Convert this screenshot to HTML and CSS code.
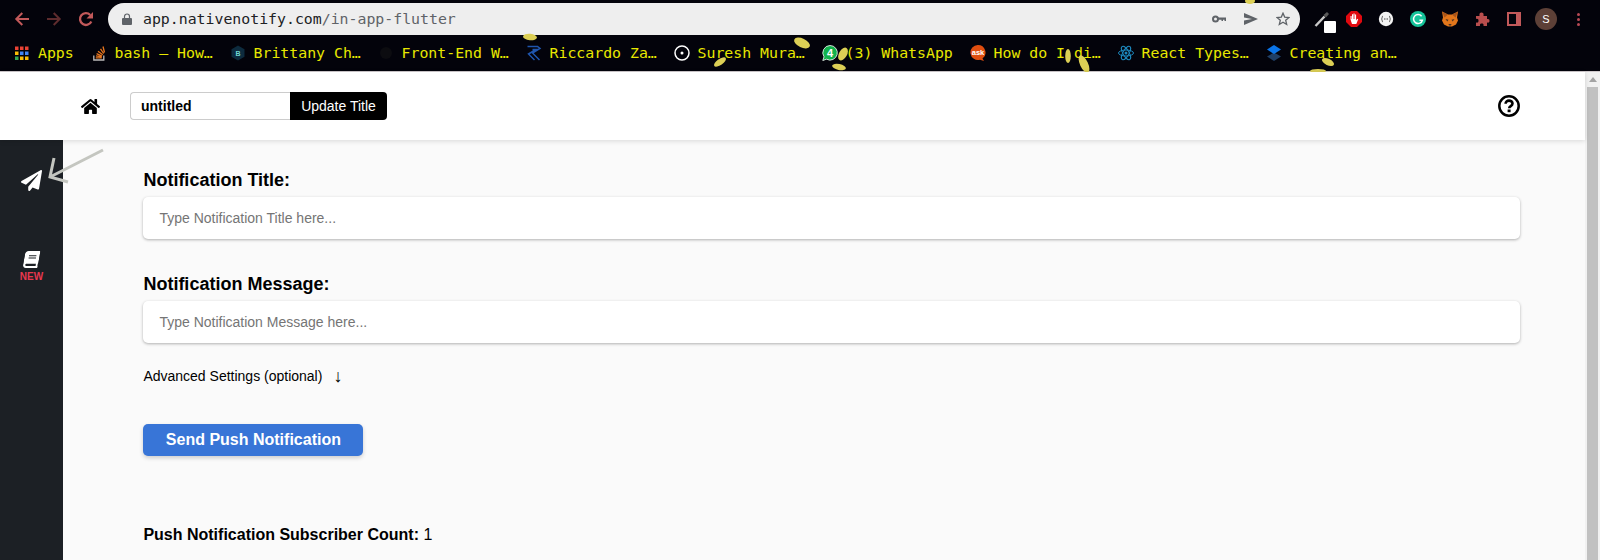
FILE: index.html
```html
<!DOCTYPE html>
<html lang="en">
<head>
<meta charset="utf-8">
<title>Native Notify</title>
<link rel="stylesheet" href="styles.css">
</head>
<body>
<div class="chrome">
  <div class="toolbar">
    <div class="nav">
      <svg class="nav-icon" viewBox="0 0 16 16"><path d="M15 8H2.500M8.300 2L2.300 8L8.300 14" fill="none" stroke="#c2595a" stroke-width="2"/></svg>
      <svg class="nav-icon" viewBox="0 0 16 16"><path d="M1 8H13.500M7.700 2L13.700 8L7.700 14" fill="none" stroke="#5e2c2e" stroke-width="2"/></svg>
      <svg class="nav-icon" viewBox="0 0 16 16"><path d="M13.300 10.500A5.900 5.900 0 1 1 12.200 4" fill="none" stroke="#c2595a" stroke-width="2.300"/><path d="M15 1V7.500H8.500z" fill="#c2595a"/></svg>
    </div>
    <div class="omnibox">
      <svg class="lock" viewBox="0 0 10 12"><path d="M1 5h8a1 1 0 0 1 1 1v5a1 1 0 0 1-1 1H1a1 1 0 0 1-1-1V6a1 1 0 0 1 1-1z" fill="#5f6368"/><path d="M2.500 5V3.500a2.500 2.500 0 0 1 5 0V5" fill="none" stroke="#5f6368" stroke-width="1.200"/></svg>
      <span class="url"><span class="host">app.nativenotify.com</span>/in-app-flutter</span>
      <div class="omni-actions">
        <svg class="omni-icon" viewBox="0 0 14 14"><circle cx="3.500" cy="7" r="2.500" fill="none" stroke="#5f6368" stroke-width="2"/><path d="M6 5.500h8V9h-1.500V7.800H11V9H9.500V7.800H6z" fill="#5f6368"/></svg>
        <svg class="omni-icon" viewBox="0 0 14 14"><path d="M0 1L14 7L0 13V8.500L8 7L0 5.500z" fill="#5f6368"/></svg>
        <svg class="omni-icon" viewBox="0 0 14 14"><path d="M7 1.200l1.700 3.900 4.300.4-3.300 2.800 1 4.200L7 10.300 3.300 12.500l1-4.200L1 5.500l4.300-.4z" fill="none" stroke="#5f6368" stroke-width="1.300"/></svg>
      </div>
    </div>
    <div class="extensions">
      <div class="ext-dropper">
        <svg class="ext-icon" viewBox="0 0 16 16"><path d="M1.500 15L10.500 5.500" stroke="#c9c9c9" stroke-width="2.400" fill="none"/><path d="M9.500 4l3.500-3 2 2-3 3.500z" fill="#5a5a5a"/></svg>
        <span class="ext-square"></span>
      </div>
      <svg class="ext-icon" viewBox="0 0 16 16"><path d="M5 0h6l5 5v6l-5 5H5l-5-5V5z" fill="#e0090f"/><path d="M4.500 8.500V5h1.100v3H6V3.200h1.100V8h.4V2.600h1.100V8H9V3.400h1.100V9.500l1.100-1.800 1 .6L10.300 13H6z" fill="#fff"/></svg>
      <svg class="ext-icon" viewBox="0 0 16 16"><circle cx="8" cy="8" r="7.200" fill="#f2f2f2"/><path d="M5 5C3.800 5 4.600 7.500 3.300 8c1.300.5.500 3 1.700 3M11 5c1.200 0 .4 2.500 1.700 3-1.300.5-.5 3-1.700 3" fill="none" stroke="#444" stroke-width=".9"/><path d="M6 7.600h1v1H6zM7.500 7.600h1v1h-1zM9 7.600h1v1H9z" fill="#444"/></svg>
      <svg class="ext-icon" viewBox="0 0 16 16"><circle cx="8" cy="8" r="8" fill="#15c39a"/><path d="M11.600 5.200A4.500 4.500 0 1 0 12.400 9.200H9.400" fill="none" stroke="#fff" stroke-width="1.500"/></svg>
      <svg class="ext-icon" viewBox="0 0 16 16"><path d="M0 .5l6 3h4l6-3-1 6 1 3-2 4L10 15.500H6l-4-2-2-4 1-3z" fill="#e2761b"/><path d="M0 .5L6 3.500 2.500 6.500zM16 .5L10 3.500l3.500 3z" fill="#a8551a"/><path d="M3.500 8l3 .8-1.200 1.700zM12.500 8l-3 .8 1.200 1.700zM6.500 13h3l-.5 1.500H7z" fill="#4a3322"/></svg>
      <svg class="ext-icon" viewBox="0 0 16 16"><path d="M2 5h3.500C5 2.500 6 1.500 7.500 1.500S10 2.500 9.500 5H13v3c2-.5 2.500.6 2.500 1.800S15 12 13 11.500V15H9.500c.4-1.800-.5-2.400-1.700-2.400S5.600 13.200 6 15H2v-3.500c1.800.5 2.500-.4 2.500-1.800S3.800 7.500 2 8z" fill="#b94e4e"/></svg>
      <svg class="ext-icon" viewBox="0 0 16 16"><path d="M2 2h12v12H2z" fill="none" stroke="#c2595a" stroke-width="2"/><path d="M10 2h4v12h-4z" fill="#c2595a"/></svg>
      <span class="avatar">S</span>
      <span class="menu-dots"><i></i><i></i><i></i></span>
    </div>
  </div>
  <div class="bookmarks">
    <div class="bookmark">
      <svg class="bm-icon" viewBox="0 0 16 16"><path d="M1 1.500h3.500V5H1z" fill="#ea4335"/><path d="M6 1.500h3.500V5H6z" fill="#ea4335"/><path d="M11 1.500h3.500V5H11z" fill="#ea4335"/><path d="M1 6.500h3.500V10H1z" fill="#fbbc05"/><path d="M6 6.500h3.500V10H6z" fill="#4285f4"/><path d="M11 6.500h3.500V10H11z" fill="#4285f4"/><path d="M1 11.500h3.500V15H1z" fill="#34a853"/><path d="M6 11.500h3.500V15H6z" fill="#fbbc05"/><path d="M11 11.500h3.500V15H11z" fill="#fbbc05"/></svg>
      <span>Apps</span>
    </div>
    <div class="bookmark">
      <svg class="bm-icon" viewBox="0 0 16 16"><path d="M2.800 10.500v4.500h10v-4.500" fill="none" stroke="#bcbbbb" stroke-width="1.300"/><path d="M4.800 12.800h6M5 10.900l5.800 1M5.600 8.700l5.400 2.400M7 6.300l4.700 3.500M9.500 3.800l3.200 4.700M12 1.500l1.500 6" stroke="#e8761f" stroke-width="1.300" fill="none"/></svg>
      <span>bash – How…</span>
    </div>
    <div class="bookmark">
      <svg class="bm-icon" viewBox="0 0 16 16"><path d="M8 .5l6.500 3.800v7.400L8 15.500l-6.500-3.800V4.300z" fill="#0d2b3e"/><text x="8" y="10.800" class="bm-glyph" fill="#6fd6d0">B</text></svg>
      <span>Brittany Ch…</span>
    </div>
    <div class="bookmark">
      <svg class="bm-icon" viewBox="0 0 16 16"><circle cx="8" cy="8" r="6" fill="#0c0c10"/></svg>
      <span>Front-End W…</span>
    </div>
    <div class="bookmark">
      <svg class="bm-icon" viewBox="0 0 16 16"><path d="M1.500 1.500h10l2.500 2-7.500 4.500 7 7M6.500 4.500h3.500L2.500 9l6 6" fill="none" stroke="#1f55ad" stroke-width="1.500"/></svg>
      <span>Riccardo Za…</span>
    </div>
    <div class="bookmark">
      <svg class="bm-icon" viewBox="0 0 16 16"><circle cx="8" cy="8" r="7" fill="none" stroke="#fff" stroke-width="1.500"/><circle cx="8" cy="8" r="1.500" fill="#fff"/></svg>
      <span>Suresh Mura…</span>
    </div>
    <div class="bookmark">
      <svg class="bm-icon" viewBox="0 0 16 16"><path d="M8 .5a7.300 7.300 0 1 1-3.500 13.700L.8 15.500l1.200-3.700A7.300 7.300 0 0 1 8 .5z" fill="#12b24c" stroke="#fff" stroke-width=".8"/><text x="8" y="12" class="bm-glyph bm-glyph-large" fill="#fff">4</text></svg>
      <span>(3) WhatsApp</span>
    </div>
    <div class="bookmark">
      <svg class="bm-icon" viewBox="0 0 16 16"><path d="M8 0a7.500 7.500 0 0 1 4.500 13.500l1.500 2.500-4-1.300A7.500 7.500 0 1 1 8 0z" fill="#df4d0f"/><text x="8" y="10" class="bm-glyph bm-glyph-ask" fill="#fff">ask</text></svg>
      <span>How do I di…</span>
    </div>
    <div class="bookmark">
      <svg class="bm-icon" viewBox="0 0 16 16"><g fill="none" stroke="#1d87bc" stroke-width="1"><ellipse cx="8" cy="8" rx="7.500" ry="3"/><ellipse cx="8" cy="8" rx="7.500" ry="3" transform="rotate(60 8 8)"/><ellipse cx="8" cy="8" rx="7.500" ry="3" transform="rotate(120 8 8)"/></g><circle cx="8" cy="8" r="1.500" fill="#1d87bc"/></svg>
      <span>React Types…</span>
    </div>
    <div class="bookmark">
      <svg class="bm-icon" viewBox="0 0 16 16"><path d="M8 7.500l7 4-7 4.500-7-4.500z" fill="#1f3f66"/><path d="M8 0l7 4.500L8 9 1 4.500z" fill="#0a74e8"/></svg>
      <span>Creating an…</span>
    </div>
  </div>
</div>
<div class="app">
  <div class="viewport">
    <header class="topbar">
      <svg class="home" viewBox="0 0 576 512"><path d="M280.370 148.260L96 300.110V464a16 16 0 0 0 16 16l112.060-.29a16 16 0 0 0 15.920-16V368a16 16 0 0 1 16-16h64a16 16 0 0 1 16 16v95.640a16 16 0 0 0 16 16.050L464 480a16 16 0 0 0 16-16V300L295.670 148.260a12.190 12.190 0 0 0-15.300 0zM571.600 251.470L488 182.560V44.050a12 12 0 0 0-12-12h-56a12 12 0 0 0-12 12v72.610L318.470 43a48 48 0 0 0-61 0L4.340 251.470a12 12 0 0 0-1.600 16.900l25.500 31A12 12 0 0 0 45.150 301l235.220-193.740a12.190 12.190 0 0 1 15.300 0L530.900 301a12 12 0 0 0 16.900-1.600l25.500-31a12 12 0 0 0-1.700-16.930z"/></svg>
      <div class="title-form">
        <input class="title-input" type="text" value="untitled" aria-label="Title">
        <button class="title-button" type="button">Update Title</button>
      </div>
      <svg class="help" viewBox="0 0 22 22"><circle cx="11" cy="11" r="9.700" fill="none" stroke="#000" stroke-width="2.500"/><path d="M7.600 8.700C7.600 6.800 9.100 5.600 11 5.600s3.500 1.100 3.500 3c0 2.600-3.300 2.500-3.300 4.700" fill="none" stroke="#000" stroke-width="2.600"/><path d="M9.600 14.500h3v2.700h-3z"/></svg>
    </header>
    <div class="workspace">
      <nav class="sidebar">
        <svg class="plane" viewBox="0 0 512 512"><path d="M476 3.200L12.500 270.600c-18.100 10.400-15.800 35.600 2.200 43.200L121 358.400l287.300-253.200c5.500-4.900 13.300 2.600 8.600 8.300L176 407v80.500c0 23.600 28.500 32.900 42.500 15.800L282 426l124.600 52.200c14.200 6 30.400-2.900 33-18.200l72-432C515 7.800 493.300-6.800 476 3.200z"/></svg>
        <div class="book-link">
          <svg class="book" viewBox="0 0 448 512"><path d="M448 360V24c0-13.300-10.700-24-24-24H96C43 0 0 43 0 96v320c0 53 43 96 96 96h328c13.300 0 24-10.700 24-24v-16c0-7.500-3.500-14.300-8.900-18.700-4.200-15.400-4.200-59.300 0-74.700 5.400-4.300 8.900-11.100 8.900-18.600zM128 134c0-3.300 2.700-6 6-6h212c3.300 0 6 2.700 6 6v20c0 3.300-2.700 6-6 6H134c-3.300 0-6-2.700-6-6v-20zm0 64c0-3.300 2.700-6 6-6h212c3.300 0 6 2.700 6 6v20c0 3.300-2.700 6-6 6H134c-3.300 0-6-2.700-6-6v-20zm253.400 250H96c-17.700 0-32-14.300-32-32 0-17.600 14.400-32 32-32h285.400c-1.900 17.100-1.900 46.900 0 64z"/></svg>
          <span class="new-tag">NEW</span>
        </div>
      </nav>
      <main class="content">
        <label class="field-label">Notification Title:</label>
        <div class="field">Type Notification Title here...</div>
        <label class="field-label field-label-next">Notification Message:</label>
        <div class="field">Type Notification Message here...</div>
        <div class="advanced"><span>Advanced Settings (optional)</span><span class="advanced-arrow">↓</span></div>
        <button class="send" type="button">Send Push Notification</button>
        <p class="count"><b>Push Notification Subscriber Count:</b> 1</p>
      </main>
    </div>
  </div>
  <div class="scrollbar">
    <span class="scroll-up"></span>
    <span class="scroll-thumb"></span>
  </div>
</div>
<svg class="overlay" viewBox="0 0 1600 560" aria-hidden="true">
  <g fill="#dccf55">
    <ellipse cx="530" cy="37" rx="7" ry="3.200" transform="rotate(5 530 37)"/>
    <ellipse cx="802" cy="43" rx="8.500" ry="4.500" transform="rotate(25 802 43)"/>
    <ellipse cx="720" cy="62" rx="7" ry="3" transform="rotate(-35 720 62)"/>
    <ellipse cx="843" cy="54" rx="4" ry="7" transform="rotate(30 843 54)"/>
    <ellipse cx="839" cy="67" rx="7" ry="3" transform="rotate(12 839 67)"/>
    <ellipse cx="1250" cy="1" rx="5" ry="3"/>
    <ellipse cx="1068" cy="56" rx="2.800" ry="7"/>
    <ellipse cx="1084" cy="64" rx="4" ry="9.500" transform="rotate(-25 1084 64)"/>
    <ellipse cx="1328" cy="62" rx="6.500" ry="3.200" transform="rotate(25 1328 62)"/>
    <ellipse cx="1318" cy="71" rx="8" ry="2"/>
  </g>
  <path d="M103 150L50 177M54 158L50 177L68 182" fill="none" stroke="#c4c6c0" stroke-width="3"/>
</svg>
</body>
</html>
```
FILE: styles.css
```css
* { box-sizing: border-box; }
html, body { margin: 0; height: 100%; overflow: hidden; }
body {
  position: relative;
  width: 1600px;
  height: 560px;
  font-family: "Liberation Sans", Arial, sans-serif;
  background: #fafafa;
  color: #000;
}

/* Browser chrome */
.chrome {
  height: 72px;
  background: #03030b;
  border-bottom: 1px solid #cfc9cc;
}
.toolbar {
  display: flex;
  align-items: center;
  height: 35px;
  padding-top: 3px;
}
.nav {
  display: flex;
  align-items: center;
  gap: 16px;
  width: 108px;
  padding-left: 14px;
}
.nav-icon { width: 16px; height: 16px; }
.omnibox {
  display: flex;
  align-items: center;
  width: 1192px;
  height: 32px;
  padding: 0 10px 0 14px;
  border-radius: 16px;
  background: #eeeeee;
}
.lock { width: 10px; height: 12px; margin-right: 11px; }
.url {
  font: 14.85px "DejaVu Sans Mono", monospace;
  color: #5f6368;
}
.host { color: #202124; }
.omni-actions {
  display: flex;
  align-items: center;
  gap: 18px;
  margin-left: auto;
}
.omni-icon { width: 14px; height: 14px; }
.extensions {
  display: grid;
  grid-auto-flow: column;
  grid-auto-columns: 32px;
  justify-items: center;
  align-items: center;
  padding-left: 6px;
}
.ext-icon { display: block; width: 16px; height: 16px; }
.ext-dropper { position: relative; width: 16px; height: 16px; }
.ext-square {
  position: absolute;
  left: 10px;
  top: 10px;
  width: 12px;
  height: 12px;
  border-radius: 1px;
  background: #fff;
}
.avatar {
  display: flex;
  align-items: center;
  justify-content: center;
  width: 22px;
  height: 22px;
  border-radius: 50%;
  background: #5d4037;
  color: #fff;
  font-size: 11px;
}
.menu-dots {
  display: flex;
  flex-direction: column;
  gap: 2px;
}
.menu-dots i {
  width: 3px;
  height: 3px;
  border-radius: 50%;
  background: #b84a55;
}
.bookmarks {
  display: flex;
  align-items: center;
  gap: 16.75px;
  height: 36px;
  padding-left: 14px;
  font: 14.85px "DejaVu Sans Mono", monospace;
  color: #e8e800;
  white-space: nowrap;
}
.bookmark {
  display: flex;
  align-items: center;
  gap: 8px;
}
.bm-icon { flex: none; width: 16px; height: 16px; }
.bm-glyph {
  font: bold 7px "Liberation Sans", sans-serif;
  text-anchor: middle;
}
.bm-glyph-large { font-size: 11px; }
.bm-glyph-ask { font-size: 7.500px; }

/* Application */
.app {
  display: flex;
  height: 488px;
}
.viewport {
  display: flex;
  flex-direction: column;
  flex: 1;
  min-width: 0;
}
.topbar {
  position: relative;
  z-index: 1;
  display: flex;
  align-items: center;
  height: 68px;
  padding: 0 65px 0 81px;
  background: #fff;
  box-shadow: 0 1px 5px rgba(0, 0, 0, .14);
}
.home { width: 19px; height: 17px; }
.title-form {
  display: flex;
  height: 28px;
  margin: 0 auto 0 30px;
}
.title-input {
  width: 160px;
  height: 28px;
  padding: 0 10px;
  border: 1px solid #ccc;
  border-right: 0;
  border-radius: 4px 0 0 4px;
  outline: 0;
  background: #fff;
  color: #000;
  font: bold 14px "Liberation Sans", sans-serif;
}
.title-button {
  width: 97px;
  height: 28px;
  padding: 0;
  border: 0;
  border-radius: 0 4px 4px 0;
  background: #000;
  color: #fff;
  font: 14px "Liberation Sans", sans-serif;
}
.help { width: 22px; height: 22px; }
.workspace {
  display: flex;
  flex: 1;
  min-height: 0;
}
.sidebar {
  display: flex;
  flex-direction: column;
  align-items: center;
  flex: none;
  width: 63px;
  padding-top: 30px;
  background: #1c2025;
}
.plane { width: 21px; height: 21px; fill: #fff; }
.book-link {
  display: flex;
  flex-direction: column;
  align-items: center;
  margin-top: 60px;
}
.book {
  width: 15px;
  height: 17px;
  fill: #fff;
  transform: skewX(-10deg);
}
.new-tag {
  margin-top: 3px;
  color: #e8384f;
  font-size: 10px;
  font-weight: 700;
  line-height: 11px;
}
.content {
  flex: 1;
  min-width: 0;
  padding: 30px 65px 0 80.4px;
  background: #fafafa;
}
.field-label {
  display: block;
  font-size: 18px;
  font-weight: 700;
  line-height: 21px;
}
.field-label-next { margin-top: 35px; }
.field {
  display: flex;
  align-items: center;
  height: 42px;
  margin-top: 6px;
  padding-left: 16px;
  border-radius: 5px;
  background: #fff;
  color: #757575;
  font-size: 14px;
  box-shadow: 0 1px 3px rgba(0, 0, 0, .3);
}
.advanced {
  display: flex;
  align-items: center;
  gap: 11px;
  margin-top: 24px;
  font-size: 14px;
  line-height: 18px;
}
.advanced-arrow { font-size: 18px; line-height: 18px; color: #000; }
.send {
  display: block;
  width: 220px;
  height: 32px;
  margin-top: 39px;
  padding: 0;
  border: 0;
  border-radius: 5px;
  background: #3875d7;
  color: #fff;
  font: bold 16px "Liberation Sans", sans-serif;
  box-shadow: 0 2px 4px rgba(0, 0, 0, .18);
}
.count {
  margin: 70px 0 0;
  font-size: 16px;
  line-height: 18px;
}

/* Scrollbar */
.scrollbar {
  position: relative;
  flex: none;
  width: 15px;
  background: #f1f1f1;
}
.scroll-up {
  position: absolute;
  left: 4px;
  top: 5px;
  border: 4px solid transparent;
  border-top: 0;
  border-bottom: 5px solid #a3a3a3;
}
.scroll-thumb {
  position: absolute;
  left: 2px;
  right: 2px;
  top: 15px;
  bottom: 0;
  background: #c1c1c1;
}

/* Free-floating decoration over the page */
.overlay {
  position: absolute;
  left: 0;
  top: 0;
  width: 1600px;
  height: 560px;
  pointer-events: none;
}
```
